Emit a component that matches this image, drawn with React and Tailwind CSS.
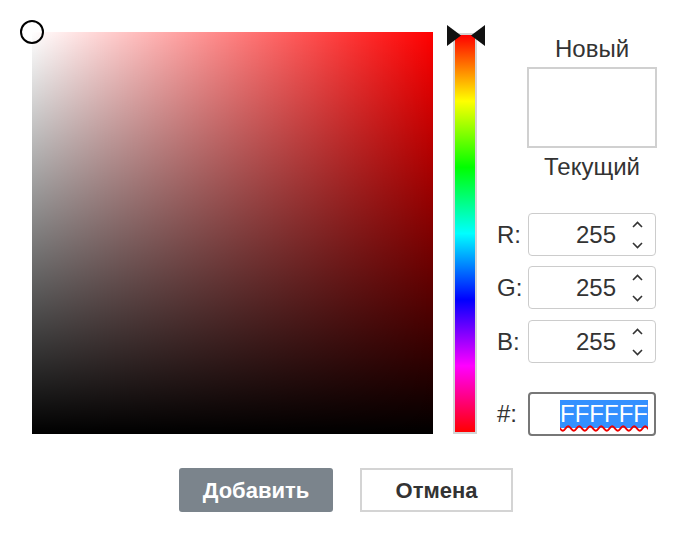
import React from 'react';

const font = { fontFamily: '"Liberation Sans", Arial, sans-serif' };

const Spinner = () => (
  <div className="flex flex-col items-center gap-[14px] mr-[12px]">
    <svg width="11" height="7" viewBox="0 0 11 7" fill="none" stroke="#333" strokeWidth="1.6">
      <path d="M1 6l4.5-4.5L10 6" />
    </svg>
    <svg width="11" height="7" viewBox="0 0 11 7" fill="none" stroke="#333" strokeWidth="1.6">
      <path d="M1 1l4.5 4.5L10 1" />
    </svg>
  </div>
);

const ChannelRow = ({ label, value, className = '' }) => (
  <div className={`flex items-center ${className}`}>
    <span className="w-[31px] text-[24px] leading-[28px] text-[#333]">{label}</span>
    <div className="w-[128px] h-[43px] border border-[#ccc] rounded-[4px] flex items-center justify-end">
      <span className="text-[24px] leading-[28px] text-[#333] mr-[16px]">{value}</span>
      <Spinner />
    </div>
  </div>
);

export default function App() {
  return (
    <div className="w-[689px] h-[553px] bg-white flex flex-col pt-[32px]" style={font}>
      {/* picker area */}
      <div className="flex pl-[32px]">
        {/* saturation / value square */}
        <div className="relative w-[401px] h-[402px] bg-[#ff0000]">
          <div className="absolute inset-0 bg-gradient-to-r from-white to-transparent" />
          <div className="absolute inset-0 bg-gradient-to-b from-transparent to-black" />
          <div className="absolute -left-[12px] -top-[12px] w-[24px] h-[24px] rounded-full border-2 border-black" />
        </div>

        {/* hue bar */}
        <div className="relative ml-[20px] mt-[1px] w-[24px] h-[401px] border-2 border-[#d4d4d4]">
          <div className="w-full h-full bg-[linear-gradient(to_bottom,#ff0000_0%,#ffff00_16.67%,#00ff00_33.33%,#00ffff_50%,#0000ff_66.67%,#ff00ff_83.33%,#ff0000_100%)]" />
          <svg className="absolute -left-[8px] -top-[10px]" width="40" height="21" viewBox="0 0 40 21">
            <path d="M0 0L14 10.5L0 21Z" fill="#111" />
            <path d="M38 0L24 10.5L38 21Z" fill="#111" />
          </svg>
        </div>

        {/* right panel */}
        <div className="ml-[20px] w-[160px] flex flex-col">
          <div className="ml-[30px] w-[130px] flex flex-col items-center">
            <span className="mt-[3px] text-[24px] leading-[28px] text-[#333]">Новый</span>
            <div className="mt-[4px] w-[130px] h-[81px] border-2 border-[#d0d0d0] bg-white" />
            <span className="mt-[5px] text-[24px] leading-[28px] text-[#333]">Текущий</span>
          </div>

          <ChannelRow label="R:" value="255" className="mt-[32px]" />
          <ChannelRow label="G:" value="255" className="mt-[10px]" />
          <ChannelRow label="B:" value="255" className="mt-[11px]" />

          <div className="flex items-center mt-[29px]">
            <span className="w-[31px] text-[24px] leading-[28px] text-[#333]">#:</span>
            <div className="w-[128px] h-[44px] border-2 border-[#777] rounded-[4px] flex items-center justify-end pr-[6px]">
              <span className="text-[24px] leading-[28px] text-white bg-[#3390ff] underline decoration-wavy decoration-[#e00] decoration-[1.5px] underline-offset-[3px]">
                FFFFFF
              </span>
            </div>
          </div>
        </div>
      </div>

      {/* buttons */}
      <div className="flex justify-center gap-[27px] mt-[32px] pl-[3px]">
        <button className="w-[154px] h-[44px] rounded-[3px] bg-[#7b848c] text-white font-bold text-[22px]">
          Добавить
        </button>
        <button className="w-[153px] h-[44px] border-2 border-[#d4d4d4] bg-white text-[#333] font-bold text-[22px]">
          Отмена
        </button>
      </div>
    </div>
  );
}
